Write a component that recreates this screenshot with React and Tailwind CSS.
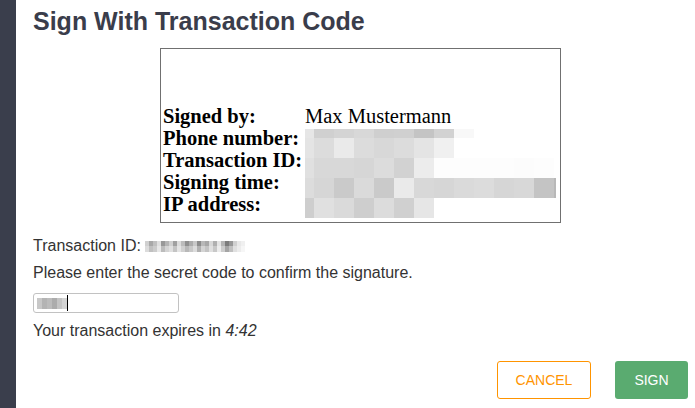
import React from 'react';

// blurred values on the signature image
const mosaic = [
    { h: 'h-[9px]', cells: ['bg-[#e6e6e6]', 'bg-[#d0d0d0]', 'bg-[#d4d4d4]', 'bg-[#d8d8d8]', 'bg-[#cfcfcf]', 'bg-[#d0d0d0]', 'bg-[#c4c4c4]', 'bg-[#d2d2d2]', 'bg-[#f8f8f8]'] },
    { h: 'h-[20px]', cells: ['bg-[#e4e4e4]', 'bg-[#dcdcdc]', 'bg-[#eaeaea]', 'bg-[#dcdcdc]', 'bg-[#d8d8d8]', 'bg-[#dcdcdc]', 'bg-[#e4e4e4]', 'bg-[#f0f0f0]'] },
    { h: 'h-[20px]', cells: ['bg-[#e0e0e0]', 'bg-[#d8d8d8]', 'bg-[#d8d8d8]', 'bg-[#d6d6d6]', 'bg-[#dcdcdc]', 'bg-[#d2d2d2]', 'bg-[#ececec]', 'bg-[#fdfdfd]', 'bg-[#fdfdfd]', 'bg-[#fdfdfd]', 'bg-[#fdfdfd]', 'bg-[#fcfcfc]', 'bg-[#fdfdfd]'] },
    { h: 'h-[20px]', cells: ['bg-[#dcdcdc]', 'bg-[#d6d6d6]', 'bg-[#cacaca]', 'bg-[#dadada]', 'bg-[#cacaca]', 'bg-[#eaeaea]', 'bg-[#d8d8d8]', 'bg-[#d6d6d6]', 'bg-[#dadada]', 'bg-[#dcdcdc]', 'bg-[#d6d6d6]', 'bg-[#d8d8d8]', 'bg-[#c4c4c4]'], tail: true },
    { h: 'h-[20px]', cells: ['bg-[#cecece]', 'bg-[#e0e0e0]', 'bg-[#dadada]', 'bg-[#cecece]', 'bg-[#dcdcdc]', 'bg-[#d0d0d0]', 'bg-[#e6e6e6]'] },
];

const idTop = ['bg-[#d0d0d0]', 'bg-[#a8a8a8]', 'bg-[#c0c0c0]', 'bg-[#e0e0e0]', 'bg-[#989898]', 'bg-[#b4b4b4]', 'bg-[#d0d0d0]', 'bg-[#a0a0a0]', 'bg-[#dcdcdc]', 'bg-[#bcbcbc]', 'bg-[#909090]', 'bg-[#acacac]', 'bg-[#c8c8c8]', 'bg-[#8c8c8c]', 'bg-[#b8b8b8]', 'bg-[#a8a8a8]', 'bg-[#d8d8d8]', 'bg-[#b0b0b0]', 'bg-[#e4e4e4]', 'bg-[#b4b4b4]', 'bg-[#7c7c7c]', 'bg-[#989898]', 'bg-[#d0d0d0]', 'bg-[#e8e8e8]', 'bg-[#f0f0f0]'];
const idBottom = ['bg-[#dcdcdc]', 'bg-[#c0c0c0]', 'bg-[#cccccc]', 'bg-[#e8e8e8]', 'bg-[#bcbcbc]', 'bg-[#d4d4d4]', 'bg-[#e0e0e0]', 'bg-[#c4c4c4]', 'bg-[#e4e4e4]', 'bg-[#d0d0d0]', 'bg-[#b8b8b8]', 'bg-[#c8c8c8]', 'bg-[#dcdcdc]', 'bg-[#b0b0b0]', 'bg-[#d4d4d4]', 'bg-[#c4c4c4]', 'bg-[#e0e0e0]', 'bg-[#c8c8c8]', 'bg-[#ececec]', 'bg-[#cccccc]', 'bg-[#a4a4a4]', 'bg-[#c0c0c0]', 'bg-[#e0e0e0]', 'bg-[#ececec]', 'bg-[#f6f6f6]'];

const codeCells = ['bg-[#c8c8c8]', 'bg-[#b4b4b4]', 'bg-[#bcbcbc]', 'bg-[#acacac]', 'bg-[#c4c4c4]', 'bg-[#d4d4d4]'];

const rows = ['Signed by:', 'Phone number:', 'Transaction ID:', 'Signing time:', 'IP address:'];

const App = () => {
    return (
        <div className="flex min-h-[408px] w-[695px] bg-white font-['Liberation_Sans',Arial,sans-serif]">
            <div className="w-4 shrink-0 bg-[#3a3e4c]" />
            <div className="flex-1 pl-[17px] pr-[7px]">
                <h1 className="mt-[7px] text-[25px] leading-[29px] font-bold text-[#3a3d4b]">Sign With Transaction Code</h1>

                <div className="mt-3 flex justify-center">
                    <div className="relative h-[175px] w-[401px] border border-[#707070] bg-white pl-[2px] pt-[56px] font-['Liberation_Serif','Times_New_Roman',serif] text-[20.5px] leading-[22px] text-black">
                        {rows.map((label, i) => (
                            <div key={label} className="flex">
                                <span className="w-[142px] shrink-0 whitespace-nowrap font-bold">{label}</span>
                                {i === 0 && <span className="whitespace-nowrap">Max Mustermann</span>}
                            </div>
                        ))}
                        <div className="absolute left-[144px] top-[80px] flex flex-col">
                            {mosaic.map((row, r) => (
                                <div key={r} className={`flex ${row.h}`}>
                                    {row.cells.map((c, k) => (
                                        <div key={k} className={`h-full ${k === 0 ? 'w-[9px]' : 'w-[20px]'} ${c}`} />
                                    ))}
                                    {row.tail && <div className="h-full w-[2px] bg-[#b8b8b8]" />}
                                </div>
                            ))}
                        </div>
                    </div>
                </div>

                <div className="mt-[12px] text-[16px] leading-[22px] text-[#333]">
                    <div className="flex items-center">
                        <span>Transaction ID:&nbsp;</span>
                        <span className="flex flex-col">
                            <span className="flex h-[5px]">
                                {idTop.map((c, k) => <span key={k} className={`h-full w-1 ${c}`} />)}
                            </span>
                            <span className="flex h-[6px]">
                                {idBottom.map((c, k) => <span key={k} className={`h-full w-1 ${c}`} />)}
                            </span>
                        </span>
                    </div>
                    <p className="mt-[5px]">Please enter the secret code to confirm the signature.</p>
                    <div className="mt-[9px] flex h-5 w-[146px] items-center rounded-[3px] border border-[#c2c2c2] bg-white pl-[3px]">
                        <div className="flex h-[11px]">
                            {codeCells.map((c, k) => <span key={k} className={`h-full w-[5px] ${c}`} />)}
                        </div>
                        <span className="h-[16px] w-px bg-black" />
                    </div>
                    <p className="mt-[7px]">Your transaction expires in <em>4:42</em></p>
                </div>

                <div className="mt-[19px] flex justify-end gap-6">
                    <button className="h-[38px] w-[94px] rounded-[3px] border border-[#ff9400] bg-white text-[14px] text-[#ff9400]">CANCEL</button>
                    <button className="h-[38px] w-[73px] rounded-[3px] bg-[#5aab70] text-[14px] text-white">SIGN</button>
                </div>
            </div>
        </div>
    );
};

export default App;
